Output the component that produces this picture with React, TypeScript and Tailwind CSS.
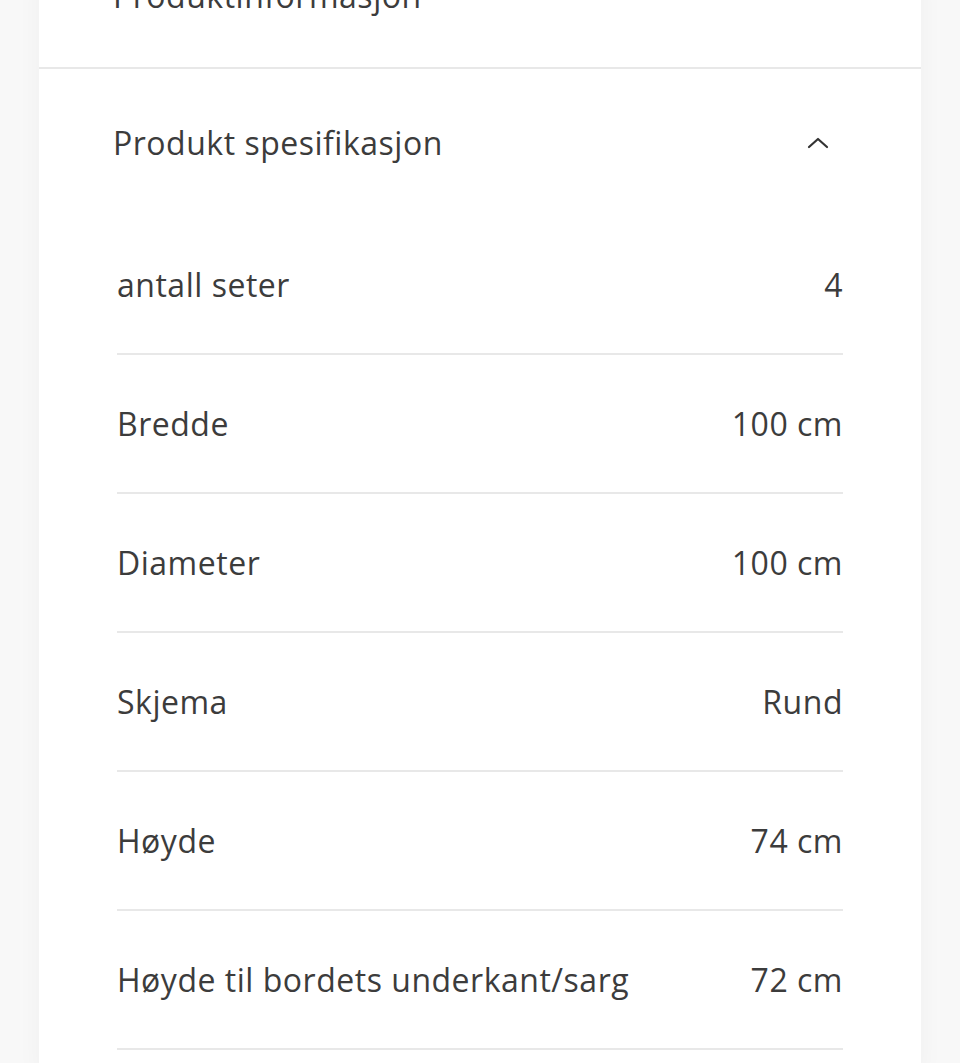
import { useState } from 'react';

const specs = [
  { label: 'antall seter', value: '4' },
  { label: 'Bredde', value: '100 cm' },
  { label: 'Diameter', value: '100 cm' },
  { label: 'Skjema', value: 'Rund' },
  { label: 'Høyde', value: '74 cm' },
  { label: 'Høyde til bordets underkant/sarg', value: '72 cm' },
];

function Chevron({ open }: { open: boolean }) {
  return (
    <svg width="22" height="14" viewBox="0 0 22 14" fill="none" className={open ? '' : 'rotate-180'}>
      <polyline points="2,11 11,3 20,11" stroke="#333" strokeWidth="2.2" strokeLinecap="round" strokeLinejoin="round" />
    </svg>
  );
}

export default function App() {
  const [open, setOpen] = useState(true);

  return (
    <div className="min-h-screen bg-[#f8f8f8] overflow-hidden font-['Open_Sans','Noto_Sans',sans-serif] text-[#3c3c3c] tracking-[0.032em]">
      <div className="mx-[39px] -mt-[24px] bg-white shadow-[0_0_24px_rgba(0,0,0,0.04)] min-h-[1100px]">
        {/* Produktinformasjon (collapsed, cut off at top) */}
        <div className="pl-[74px] pr-[92px] pb-[51px] border-b-2 border-[#e8e8e8]">
          <div className="text-[32px] leading-[40px]">Produktinformasjon</div>
        </div>

        {/* Produkt spesifikasjon */}
        <button
          onClick={() => setOpen(!open)}
          className="w-full flex items-center justify-between pl-[74px] pr-[92px] pt-[54px] pb-[53px] text-left"
        >
          <span className="text-[32px] leading-[40px]">Produkt spesifikasjon</span>
          <Chevron open={open} />
        </button>

        {open && (
          <div className="px-[78px]">
            {specs.map((s) => (
              <div
                key={s.label}
                className="flex items-center justify-between pt-[49px] pb-[48px] border-b-2 border-[#e8e8e8] text-[32px] leading-[40px]"
              >
                <span>{s.label}</span>
                <span>{s.value}</span>
              </div>
            ))}
          </div>
        )}
      </div>
    </div>
  );
}
